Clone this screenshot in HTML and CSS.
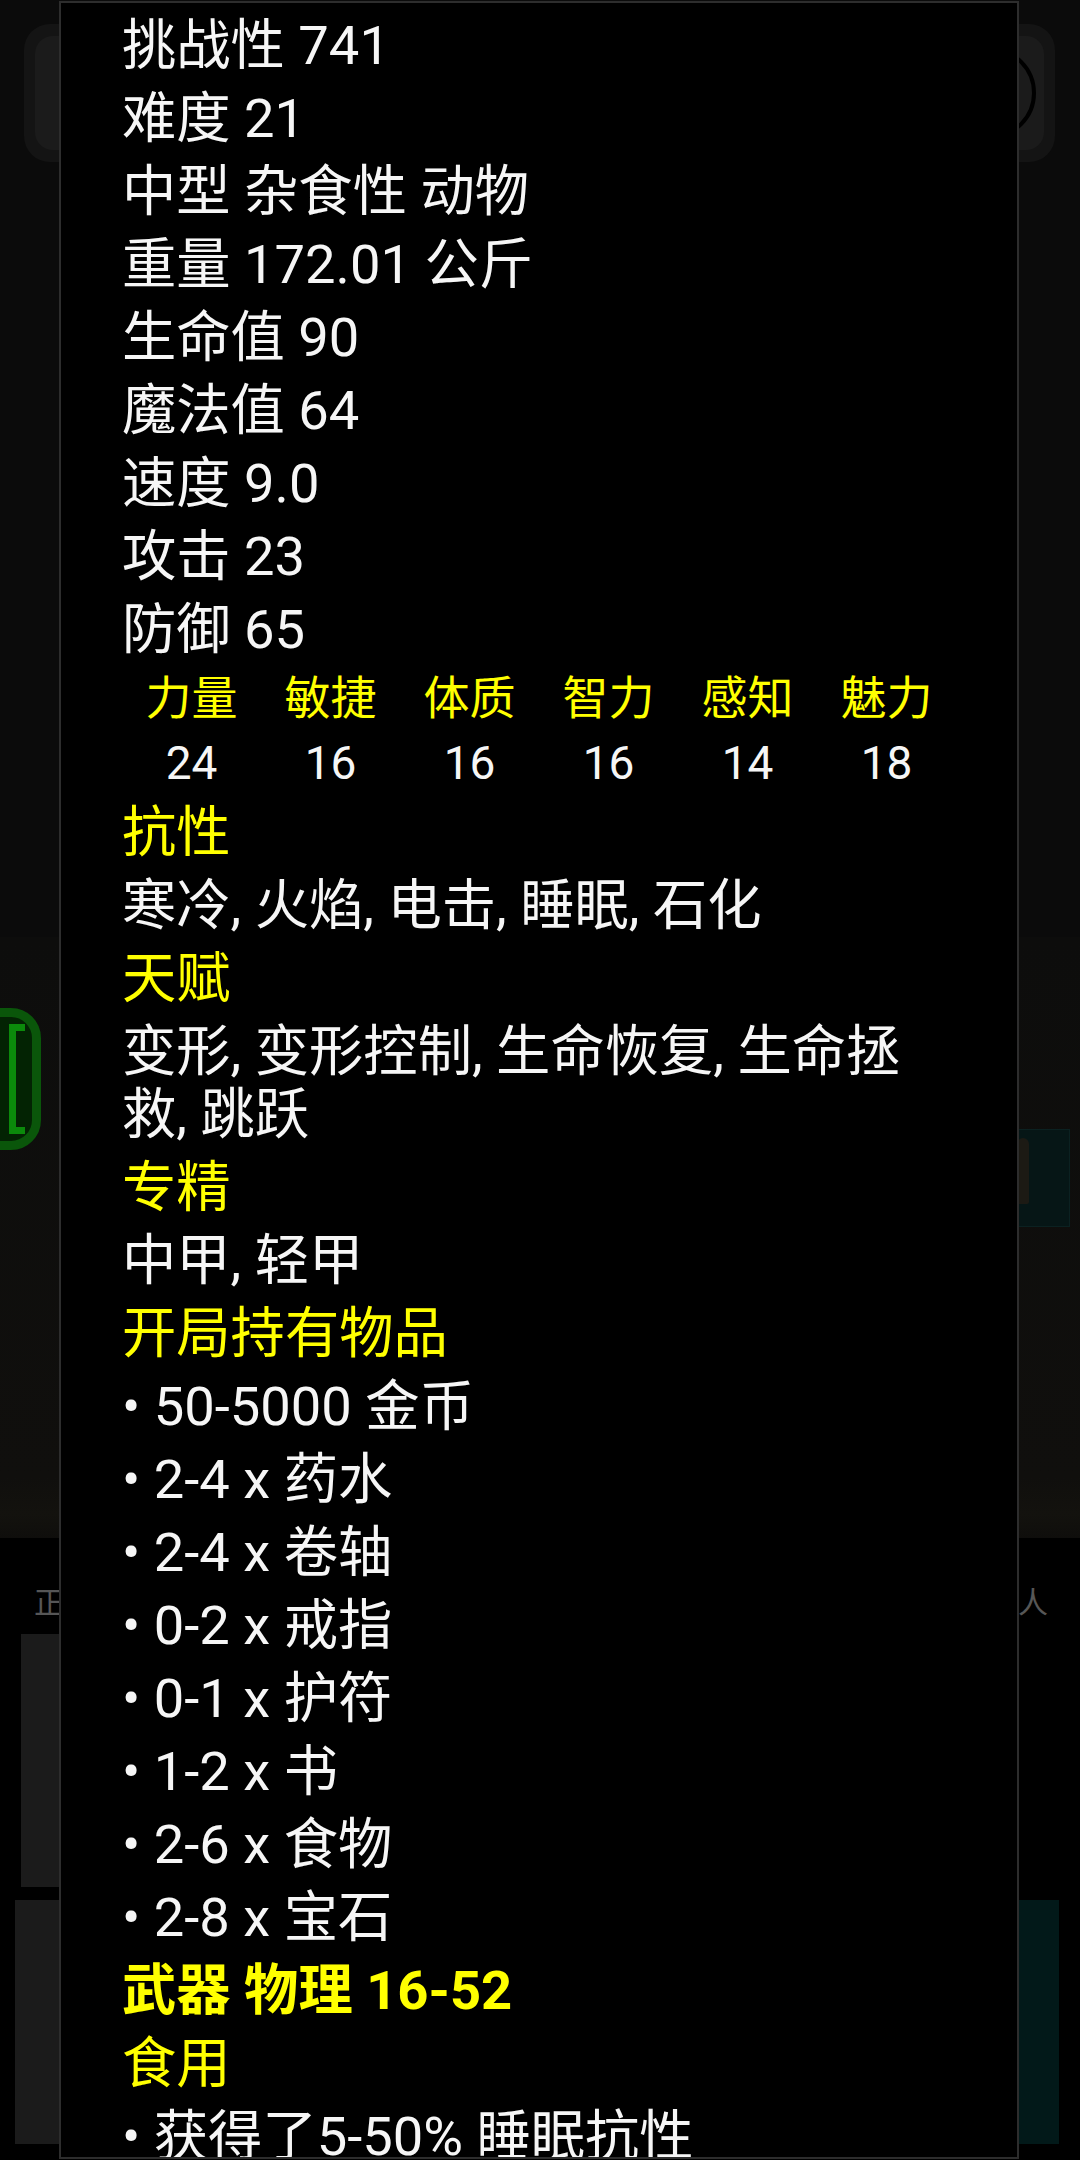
FILE: index.html
```html
<!DOCTYPE html>
<html lang="zh-CN">
<head>
<meta charset="utf-8">
<title>怪物信息</title>
<link rel="stylesheet" href="styles.css">
</head>
<body>
<div class="page">
  <header class="bg-top">
    <div class="bg-btn"><div class="bg-btn-inner"></div></div>
    <div class="bg-btn"><div class="bg-btn-inner"><span class="ring"></span></div></div>
  </header>
  <section class="bg-scene">
    <div class="green-btn"><span class="bracket"></span></div>
    <div class="portrait"><span class="figure"></span></div>
  </section>
  <nav class="bg-tabs"><span>正面</span><span>敌人</span></nav>
  <section class="bg-panels">
    <div class="panel-a"></div>
    <div class="panel-row"><div class="panel-b"></div><div class="panel-c"></div></div>
  </section>

  <div class="dialog">
    <p class="ln">挑战性 741</p>
    <p class="ln">难度 21</p>
    <p class="ln">中型 杂食性 动物</p>
    <p class="ln">重量 172.01 公斤</p>
    <p class="ln">生命值 90</p>
    <p class="ln">魔法值 64</p>
    <p class="ln">速度 9.0</p>
    <p class="ln">攻击 23</p>
    <p class="ln">防御 65</p>
    <div class="stats">
      <span class="stat-label">力量</span>
      <span class="stat-label">敏捷</span>
      <span class="stat-label">体质</span>
      <span class="stat-label">智力</span>
      <span class="stat-label">感知</span>
      <span class="stat-label">魅力</span>
      <span class="stat-val">24</span>
      <span class="stat-val">16</span>
      <span class="stat-val">16</span>
      <span class="stat-val">16</span>
      <span class="stat-val">14</span>
      <span class="stat-val">18</span>
    </div>
    <p class="ln hd">抗性</p>
    <p class="ln">寒冷, 火焰, 电击, 睡眠, 石化</p>
    <p class="ln hd">天赋</p>
    <p class="ln">变形, 变形控制, 生命恢复, 生命拯救, 跳跃</p>
    <p class="ln hd">专精</p>
    <p class="ln">中甲, 轻甲</p>
    <p class="ln hd">开局持有物品</p>
    <p class="ln">• 50-5000 金币</p>
    <p class="ln">• 2-4 x 药水</p>
    <p class="ln">• 2-4 x 卷轴</p>
    <p class="ln">• 0-2 x 戒指</p>
    <p class="ln">• 0-1 x 护符</p>
    <p class="ln">• 1-2 x 书</p>
    <p class="ln">• 2-6 x 食物</p>
    <p class="ln">• 2-8 x 宝石</p>
    <p class="ln hd strong">武器 物理 16-52</p>
    <p class="ln hd">食用</p>
    <p class="ln">• 获得了5-50% 睡眠抗性</p>
  </div>
</div>
</body>
</html>
```
FILE: styles.css
```css
html, body {
  margin: 0;
  padding: 0;
  background: #0b0b0b;
}

body {
  font-family: Roboto, "Noto Sans CJK SC", sans-serif;
}

.page {
  position: relative;
  width: 1080px;
  height: 2160px;
  overflow: hidden;
  background: #0b0b0b;
}

/* ---------- dimmed background screen ---------- */
.bg-top {
  height: 937px;
  box-sizing: border-box;
  padding: 24px 25px 0 24px;
  display: flex;
  justify-content: space-between;
  align-items: flex-start;
}

.bg-btn {
  width: 130px;
  height: 138px;
  box-sizing: border-box;
  padding: 12px 11px;
  border-radius: 26px;
  background: #141414;
}

.bg-btn-inner {
  height: 100%;
  border-radius: 18px;
  background: #1b1b1b;
  display: flex;
  align-items: center;
  justify-content: center;
}

.ring {
  width: 84px;
  height: 84px;
  border: 4px solid #000;
  border-radius: 50%;
}

.bg-scene {
  height: 601px;
  display: flex;
  justify-content: space-between;
  align-items: flex-start;
  background-color: #0e0d0c;
  background-image:
    radial-gradient(circle at 20% 30%, rgba(255,255,255,0.025) 0 30px, transparent 60px),
    radial-gradient(circle at 80% 60%, rgba(255,255,255,0.02) 0 40px, transparent 80px),
    linear-gradient(180deg, #0d0d0c 0%, #100f0d 90%, #13120e 96%, #0f0e0c 100%);
}

.green-btn {
  margin-top: 71px;
  margin-left: -100px;
  width: 141px;
  height: 142px;
  box-sizing: border-box;
  border: 9px solid #0a560a;
  border-radius: 30px;
  background: #032303;
  display: flex;
  align-items: center;
  justify-content: flex-end;
  padding-right: 7px;
}

.bracket {
  width: 9px;
  height: 96px;
  border: 7px solid #0b8a0b;
  border-right: none;
}

.portrait {
  margin-top: 192px;
  margin-right: 10px;
  width: 90px;
  height: 98px;
  box-sizing: border-box;
  border: 1px solid #0b2121;
  background: #061616;
  display: flex;
  align-items: flex-start;
  padding: 8px 0 0 36px;
}

.figure {
  width: 12px;
  height: 66px;
  border-radius: 6px 6px 2px 2px;
  background: #1c1a14;
}

.bg-tabs {
  height: 96px;
  box-sizing: border-box;
  padding: 47px 32px 0 34px;
  display: flex;
  justify-content: space-between;
  background: #000;
  color: #565656;
  font-family: "Noto Sans CJK SC", sans-serif;
  font-size: 30px;
  line-height: 30px;
}

.bg-panels {
  display: flex;
  flex-direction: column;
  gap: 13px;
  background: #000;
  height: 527px;
}

.panel-a {
  margin-left: 21px;
  width: 480px;
  height: 253px;
  background: #1b1b1b;
}

.panel-row {
  display: flex;
  justify-content: space-between;
  padding: 0 21px 0 15px;
}

.panel-b {
  width: 480px;
  height: 244px;
  background: #1b1b1b;
}

.panel-c {
  width: 420px;
  height: 244px;
  background: #021919;
}

/* ---------- info dialog ---------- */
.dialog {
  position: absolute;
  top: 1px;
  left: 59px;
  width: 960px;
  height: 2158px;
  box-sizing: border-box;
  border: 2px solid #2d2d2d;
  background: #000;
  padding: 5.5px 61px 0;
  overflow: hidden;
  color: #f6f6f6;
}

.ln {
  margin: 0;
  padding: 5px 0;
  font-size: 54.3px;
  line-height: 63px;
}

.hd {
  color: #ffff00;
}

.strong {
  font-weight: bold;
}

.stats {
  display: grid;
  grid-template-columns: repeat(6, 1fr);
  grid-auto-rows: 65px;
  font-size: 46px;
  line-height: 65px;
  text-align: center;
}

.stat-label {
  color: #ffff00;
}

.stat-val {
  color: #f6f6f6;
}
```
